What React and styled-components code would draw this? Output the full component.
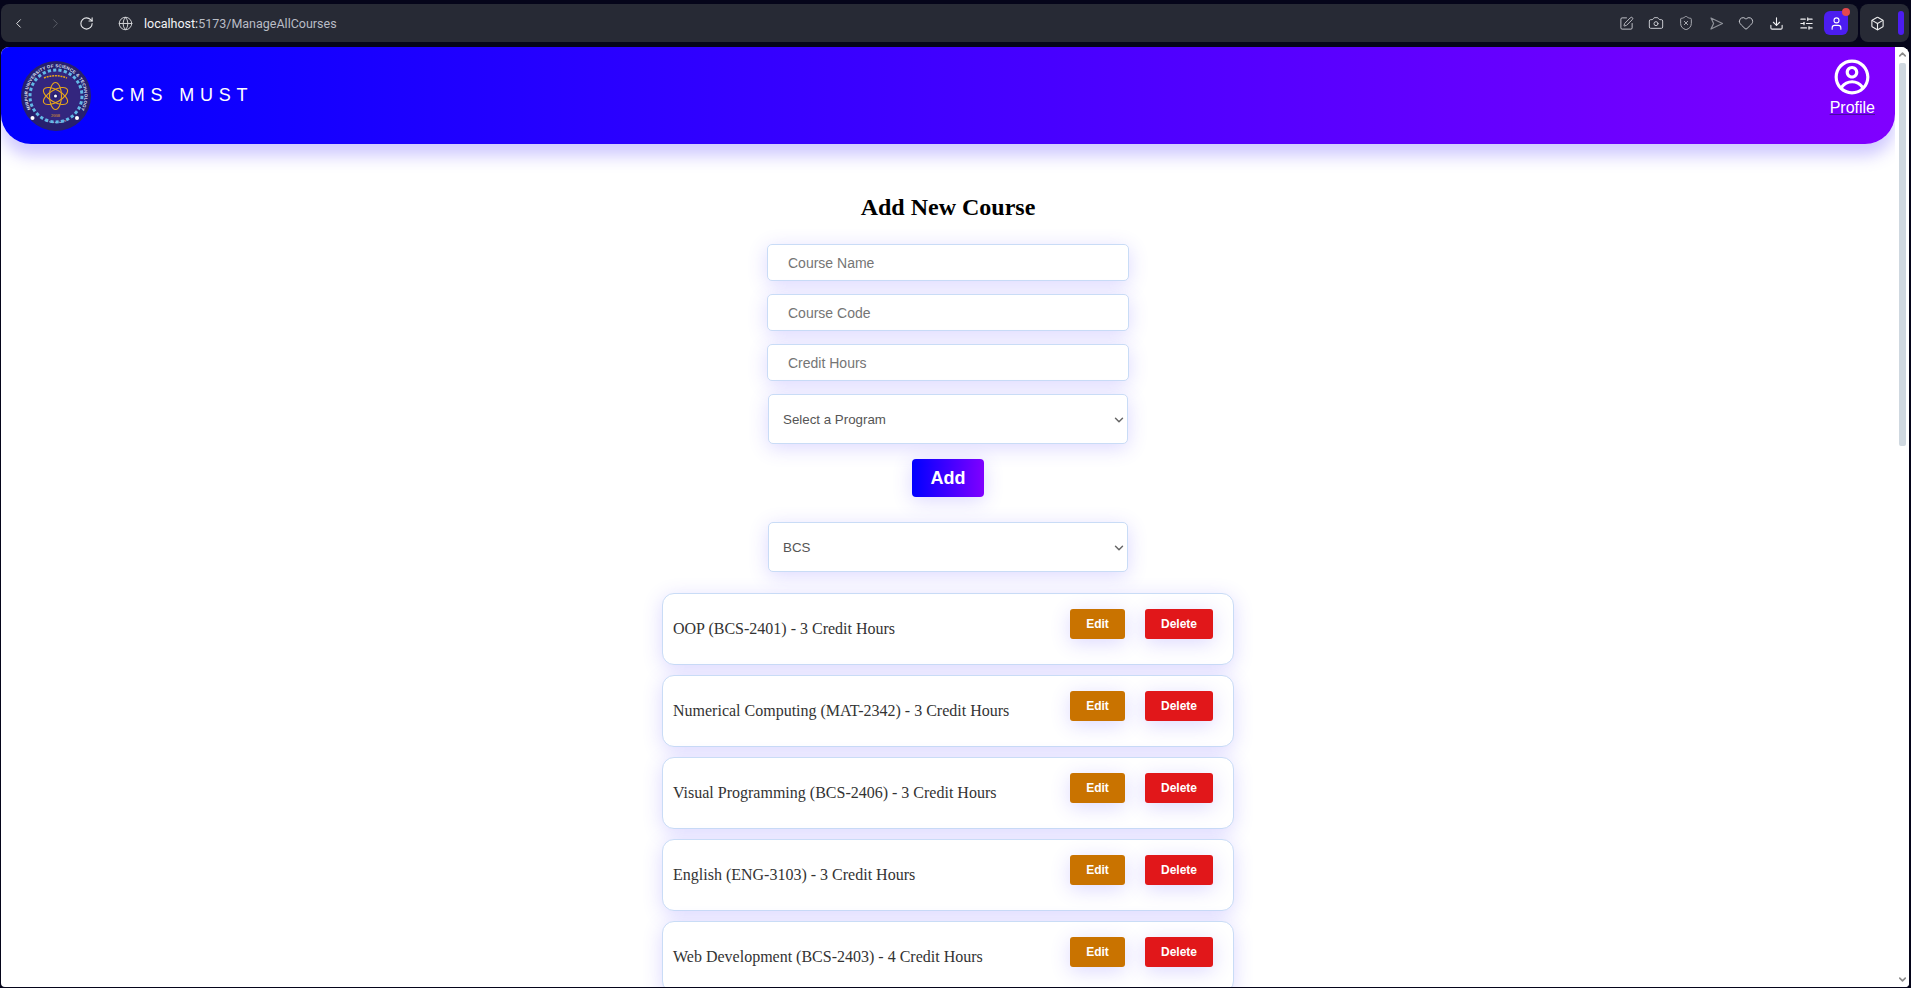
import React from "react";
import styled, { createGlobalStyle } from "styled-components";
import { ChevronLeft, ChevronRight, RotateCw, Globe, SquarePen, Camera, ShieldX, Heart, Download, SlidersHorizontal, User, Box, ChevronUp, ChevronDown } from "lucide-react";
import { CgProfile } from "react-icons/cg";

const Global = createGlobalStyle`
  html, body { margin: 0; padding: 0; height: 988px; overflow: hidden; background: #05051a; }
  * { box-sizing: border-box; }
`;

const softShadow = "0 4px 20px rgba(80, 60, 255, 0.2)";

const Windowed = styled.div`
  width: 1911px; height: 988px; display: flex; flex-direction: column;
  background: #05051a; overflow: hidden;
`;
const Chrome = styled.div`
  height: 47px; padding: 4px 2px 5px 1px; display: flex; gap: 2px; flex: none;
`;
const UrlBar = styled.div`
  flex: 1; background: #272a35; border-radius: 8px; display: flex; align-items: center;
  padding: 0 8px 0 10px; font: 12.5px "Roboto", "Liberation Sans", sans-serif; color: #b9bcc5;
`;
const NavButton = styled.span`
  width: ${p => p.$w}px; display: flex; align-items: center; color: ${p => p.$dim ? "#5c5f69" : "#e6e7ea"};
`;
const Address = styled.span`
  margin-left: 11px;
  b { color: #f2f3f5; font-weight: 400; }
`;
const Spacer = styled.div` flex: 1; `;
const ToolIcon = styled.span`
  width: 30px; display: flex; justify-content: center; align-items: center; color: ${p => p.$c || "#c6c8ce"};
`;
const Avatar = styled.span`
  position: relative; width: 24px; height: 24px; margin-left: 3px; margin-right: 2px;
  background: #4c1df0; border-radius: 6px; color: #fff;
  display: flex; align-items: center; justify-content: center;
`;
const Dot = styled.span`
  position: absolute; top: -3px; right: -2px; width: 8px; height: 8px; border-radius: 50%; background: #e5484d;
`;
const SidePanel = styled.div`
  width: 49px; background: #272a35; border-radius: 8px; display: flex; align-items: center;
  padding-left: 10px; gap: 13px; color: #eceded;
`;
const SideBar = styled.span`
  width: 6px; height: 24px; border-radius: 3px; background: #4c1df0;
`;

const Viewport = styled.div`
  flex: 1; min-height: 0; margin: 0 2px 1px 1px; background: #fff; border-radius: 8px 8px 4px 4px;
  display: flex; overflow: hidden;
`;
const Page = styled.div`
  flex: 1; min-width: 0; display: flex; flex-direction: column; overflow: hidden;
`;
const Header = styled.header`
  flex: none; height: 97px; padding: 0 20px; display: flex; align-items: center; justify-content: space-between;
  background: linear-gradient(to right, #0000ff, #8000ff);
  border-radius: 0 0 30px 30px;
  box-shadow: 0 12px 16px rgba(80, 60, 255, 0.27);
  color: #fff;
`;
const Brand = styled.div`
  display: flex; align-items: center; gap: 20px;
`;
const Title = styled.div`
  font: 18px "Liberation Sans", Arial, sans-serif; letter-spacing: 5.8px; white-space: pre;
`;
const ProfileLink = styled.a`
  display: flex; flex-direction: column; align-items: center; margin: 0 0 16px 0;
  font: 16px/18px "Liberation Sans", Arial, sans-serif; color: #fff;
  text-decoration: underline; text-decoration-color: rgba(50,20,120,.7);
  svg { display: block; margin-bottom: 3px; }
`;
const Main = styled.main`
  display: flex; flex-direction: column; align-items: center; padding-top: 49px;
`;
const Heading = styled.h2`
  margin: 0 0 23px; font: bold 24px/28px "Liberation Serif", "Times New Roman", serif; color: #000;
`;
const Form = styled.form`
  display: flex; flex-direction: column; align-items: center;
`;
const Input = styled.input`
  width: 362px; height: 37px; margin-bottom: 13px; padding: 0 20px;
  background: #fff; border: 1px solid #c9dcf6; border-radius: 5px;
  font: 14px "Liberation Sans", Arial, sans-serif; outline: none;
  box-shadow: ${softShadow};
  &::placeholder { color: #757575; opacity: 1; }
`;
const SelectWrap = styled.div`
  position: relative; width: 360px; height: 50px; margin-top: ${p => p.$top || 0}px;
  svg { position: absolute; right: 2px; top: 19px; color: #666; pointer-events: none; }
`;
const Select = styled.select`
  appearance: none; width: 100%; height: 100%; padding: 0 14px; background: #fff;
  border: 1px solid #c9dcf6; border-radius: 5px; color: #555;
  font: 13.33px "Liberation Sans", Arial, sans-serif; outline: none;
  box-shadow: ${softShadow};
`;
const AddButton = styled.button`
  width: 72px; height: 38px; margin-top: 15px; border: none; border-radius: 4px;
  background: linear-gradient(to right, #0000ff, #8000ff); color: #fff;
  font: bold 18px "Liberation Sans", Arial, sans-serif;
  box-shadow: ${softShadow};
`;
const CourseList = styled.ul`
  list-style: none; margin: 21px 0 0; padding: 0; width: 572px;
  display: flex; flex-direction: column; gap: 10px;
`;
const CourseItem = styled.li`
  height: 72px; flex: none; padding: 0 20px 0 10px; display: flex; justify-content: space-between;
  background: #fff; border: 1px solid #c9dcf6; border-radius: 12px;
  box-shadow: ${softShadow};
`;
const CourseText = styled.span`
  align-self: center; font: 16px "Liberation Serif", "Times New Roman", serif; color: #333;
`;
const Actions = styled.div`
  display: flex; gap: 20px; padding-top: 15px;
`;
const ActionButton = styled.button`
  height: 30px; padding: 0; width: ${p => p.$w}px; border: none; border-radius: 3px;
  background: ${p => p.$bg}; color: #fff;
  font: bold 12px "Liberation Sans", Arial, sans-serif;
  box-shadow: ${softShadow};
`;
const Scrollbar = styled.div`
  flex: none; width: 14px; display: flex; flex-direction: column; align-items: center; background: #fff;
  padding: 2px 0; color: #8a8a8a;
`;
const Thumb = styled.div`
  width: 7px; height: 383px; margin-top: 3px; border-radius: 2px; background: #cfd8e0;
`;
const TrackFill = styled.div` flex: 1; `;

const Logo = () => (
  <svg width="70" height="70" viewBox="0 0 70 70" aria-hidden="true">
    <defs>
      <path id="ringTop" d="M10.3 49 A28.5 28.5 0 1 1 59.7 49" />
      <path id="ringBottom" d="M20 58 A30 30 0 0 0 50 58" />
    </defs>
    <circle cx="35" cy="35" r="35" fill="#27206e" />
    <text fontFamily="Liberation Sans" fontSize="4.4" fontWeight="bold" fill="#dfe3f5" letterSpacing=".2">
      <textPath href="#ringTop" startOffset="1">MIRPUR UNIVERSITY OF SCIENCE &amp; TECHNOLOGY</textPath>
    </text>
    <text fontFamily="Liberation Sans" fontSize="4.4" fontWeight="bold" fill="#e6e8f5" letterSpacing=".9">
      <textPath href="#ringBottom" startOffset="4">MIRPUR</textPath>
    </text>
    <circle cx="35" cy="35" r="26" fill="#33267e" stroke="#63b8e6" strokeWidth="3" strokeDasharray="3.2 2.2" />
    <circle cx="35" cy="35" r="23.5" fill="#33267e" />
    <circle cx="11.5" cy="57" r="2" fill="#fff" />
    <circle cx="56" cy="57" r="2" fill="#fff" />
    <g fill="none" stroke="#e6a51c" strokeWidth="1.1">
      <ellipse cx="34.5" cy="35" rx="13.5" ry="6" transform="rotate(90 34.5 35)" />
      <ellipse cx="34.5" cy="35" rx="13.5" ry="6" transform="rotate(30 34.5 35)" />
      <ellipse cx="34.5" cy="35" rx="13.5" ry="6" transform="rotate(150 34.5 35)" />
    </g>
    <circle cx="34.5" cy="35" r="3" fill="#27206e" />
    <circle cx="34.5" cy="35" r="1.5" fill="#fff" />
    <path d="M23 17 Q34.5 12.5 46 17" fill="none" stroke="#e6a51c" strokeWidth="1.5" strokeDasharray="2 .8" />
    <text x="34.5" y="56" textAnchor="middle" fontFamily="Liberation Serif" fontSize="4.4" fill="#e6a51c">2008</text>
  </svg>
);

const SendIcon = () => (
  <svg width="15" height="15" viewBox="0 0 15 15" fill="none" stroke="#8f929a" strokeWidth="1.2" strokeLinejoin="round">
    <path d="M2 2 L13.5 7.5 L2 13 L4.6 7.5 Z" />
  </svg>
);

const courses = [
  "OOP (BCS-2401) - 3 Credit Hours",
  "Numerical Computing (MAT-2342) - 3 Credit Hours",
  "Visual Programming (BCS-2406) - 3 Credit Hours",
  "English (ENG-3103) - 3 Credit Hours",
  "Web Development (BCS-2403) - 4 Credit Hours",
];

export default function App() {
  return (
    <Windowed>
      <Global />
      <Chrome>
        <UrlBar>
          <NavButton $w={37}><ChevronLeft size={15} strokeWidth={1.5} /></NavButton>
          <NavButton $w={31} $dim><ChevronRight size={15} strokeWidth={1.5} /></NavButton>
          <NavButton $w={39}><RotateCw size={15} strokeWidth={1.75} /></NavButton>
          <Globe size={15} strokeWidth={1.5} color="#d5d6da" />
          <Address><b>localhost:</b>5173/ManageAllCourses</Address>
          <Spacer />
          <ToolIcon><SquarePen size={15} strokeWidth={1.5} /></ToolIcon>
          <ToolIcon><Camera size={16} strokeWidth={1.5} /></ToolIcon>
          <ToolIcon $c="#a9abb2"><ShieldX size={16} strokeWidth={1.5} /></ToolIcon>
          <ToolIcon><SendIcon /></ToolIcon>
          <ToolIcon><Heart size={16} strokeWidth={1.5} /></ToolIcon>
          <ToolIcon $c="#f0f0f2"><Download size={15} strokeWidth={1.75} /></ToolIcon>
          <ToolIcon $c="#f0f0f2"><SlidersHorizontal size={15} strokeWidth={1.75} /></ToolIcon>
          <Avatar><User size={15} strokeWidth={1.75} /><Dot /></Avatar>
        </UrlBar>
        <SidePanel>
          <Box size={15} strokeWidth={1.75} />
          <SideBar />
        </SidePanel>
      </Chrome>
      <Viewport>
        <Page>
          <Header>
            <Brand>
              <Logo />
              <Title>CMS MUST</Title>
            </Brand>
            <ProfileLink href="#profile">
              <CgProfile size={38} />
              Profile
            </ProfileLink>
          </Header>
          <Main>
            <Heading>Add New Course</Heading>
            <Form>
              <Input placeholder="Course Name" />
              <Input placeholder="Course Code" />
              <Input placeholder="Credit Hours" />
              <SelectWrap>
                <Select defaultValue=""><option value="">Select a Program</option></Select>
                <ChevronDown size={14} strokeWidth={2.5} />
              </SelectWrap>
              <AddButton type="button">Add</AddButton>
            </Form>
            <SelectWrap $top={25}>
              <Select defaultValue="BCS"><option>BCS</option></Select>
              <ChevronDown size={14} strokeWidth={2.5} />
            </SelectWrap>
            <CourseList>
              {courses.map(c => (
                <CourseItem key={c}>
                  <CourseText>{c}</CourseText>
                  <Actions>
                    <ActionButton $w={55} $bg="#c97300">Edit</ActionButton>
                    <ActionButton $w={68} $bg="#e1171a">Delete</ActionButton>
                  </Actions>
                </CourseItem>
              ))}
            </CourseList>
          </Main>
        </Page>
        <Scrollbar>
          <ChevronUp size={11} strokeWidth={3.5} />
          <Thumb />
          <TrackFill />
          <ChevronDown size={11} strokeWidth={3.5} />
        </Scrollbar>
      </Viewport>
    </Windowed>
  );
}
